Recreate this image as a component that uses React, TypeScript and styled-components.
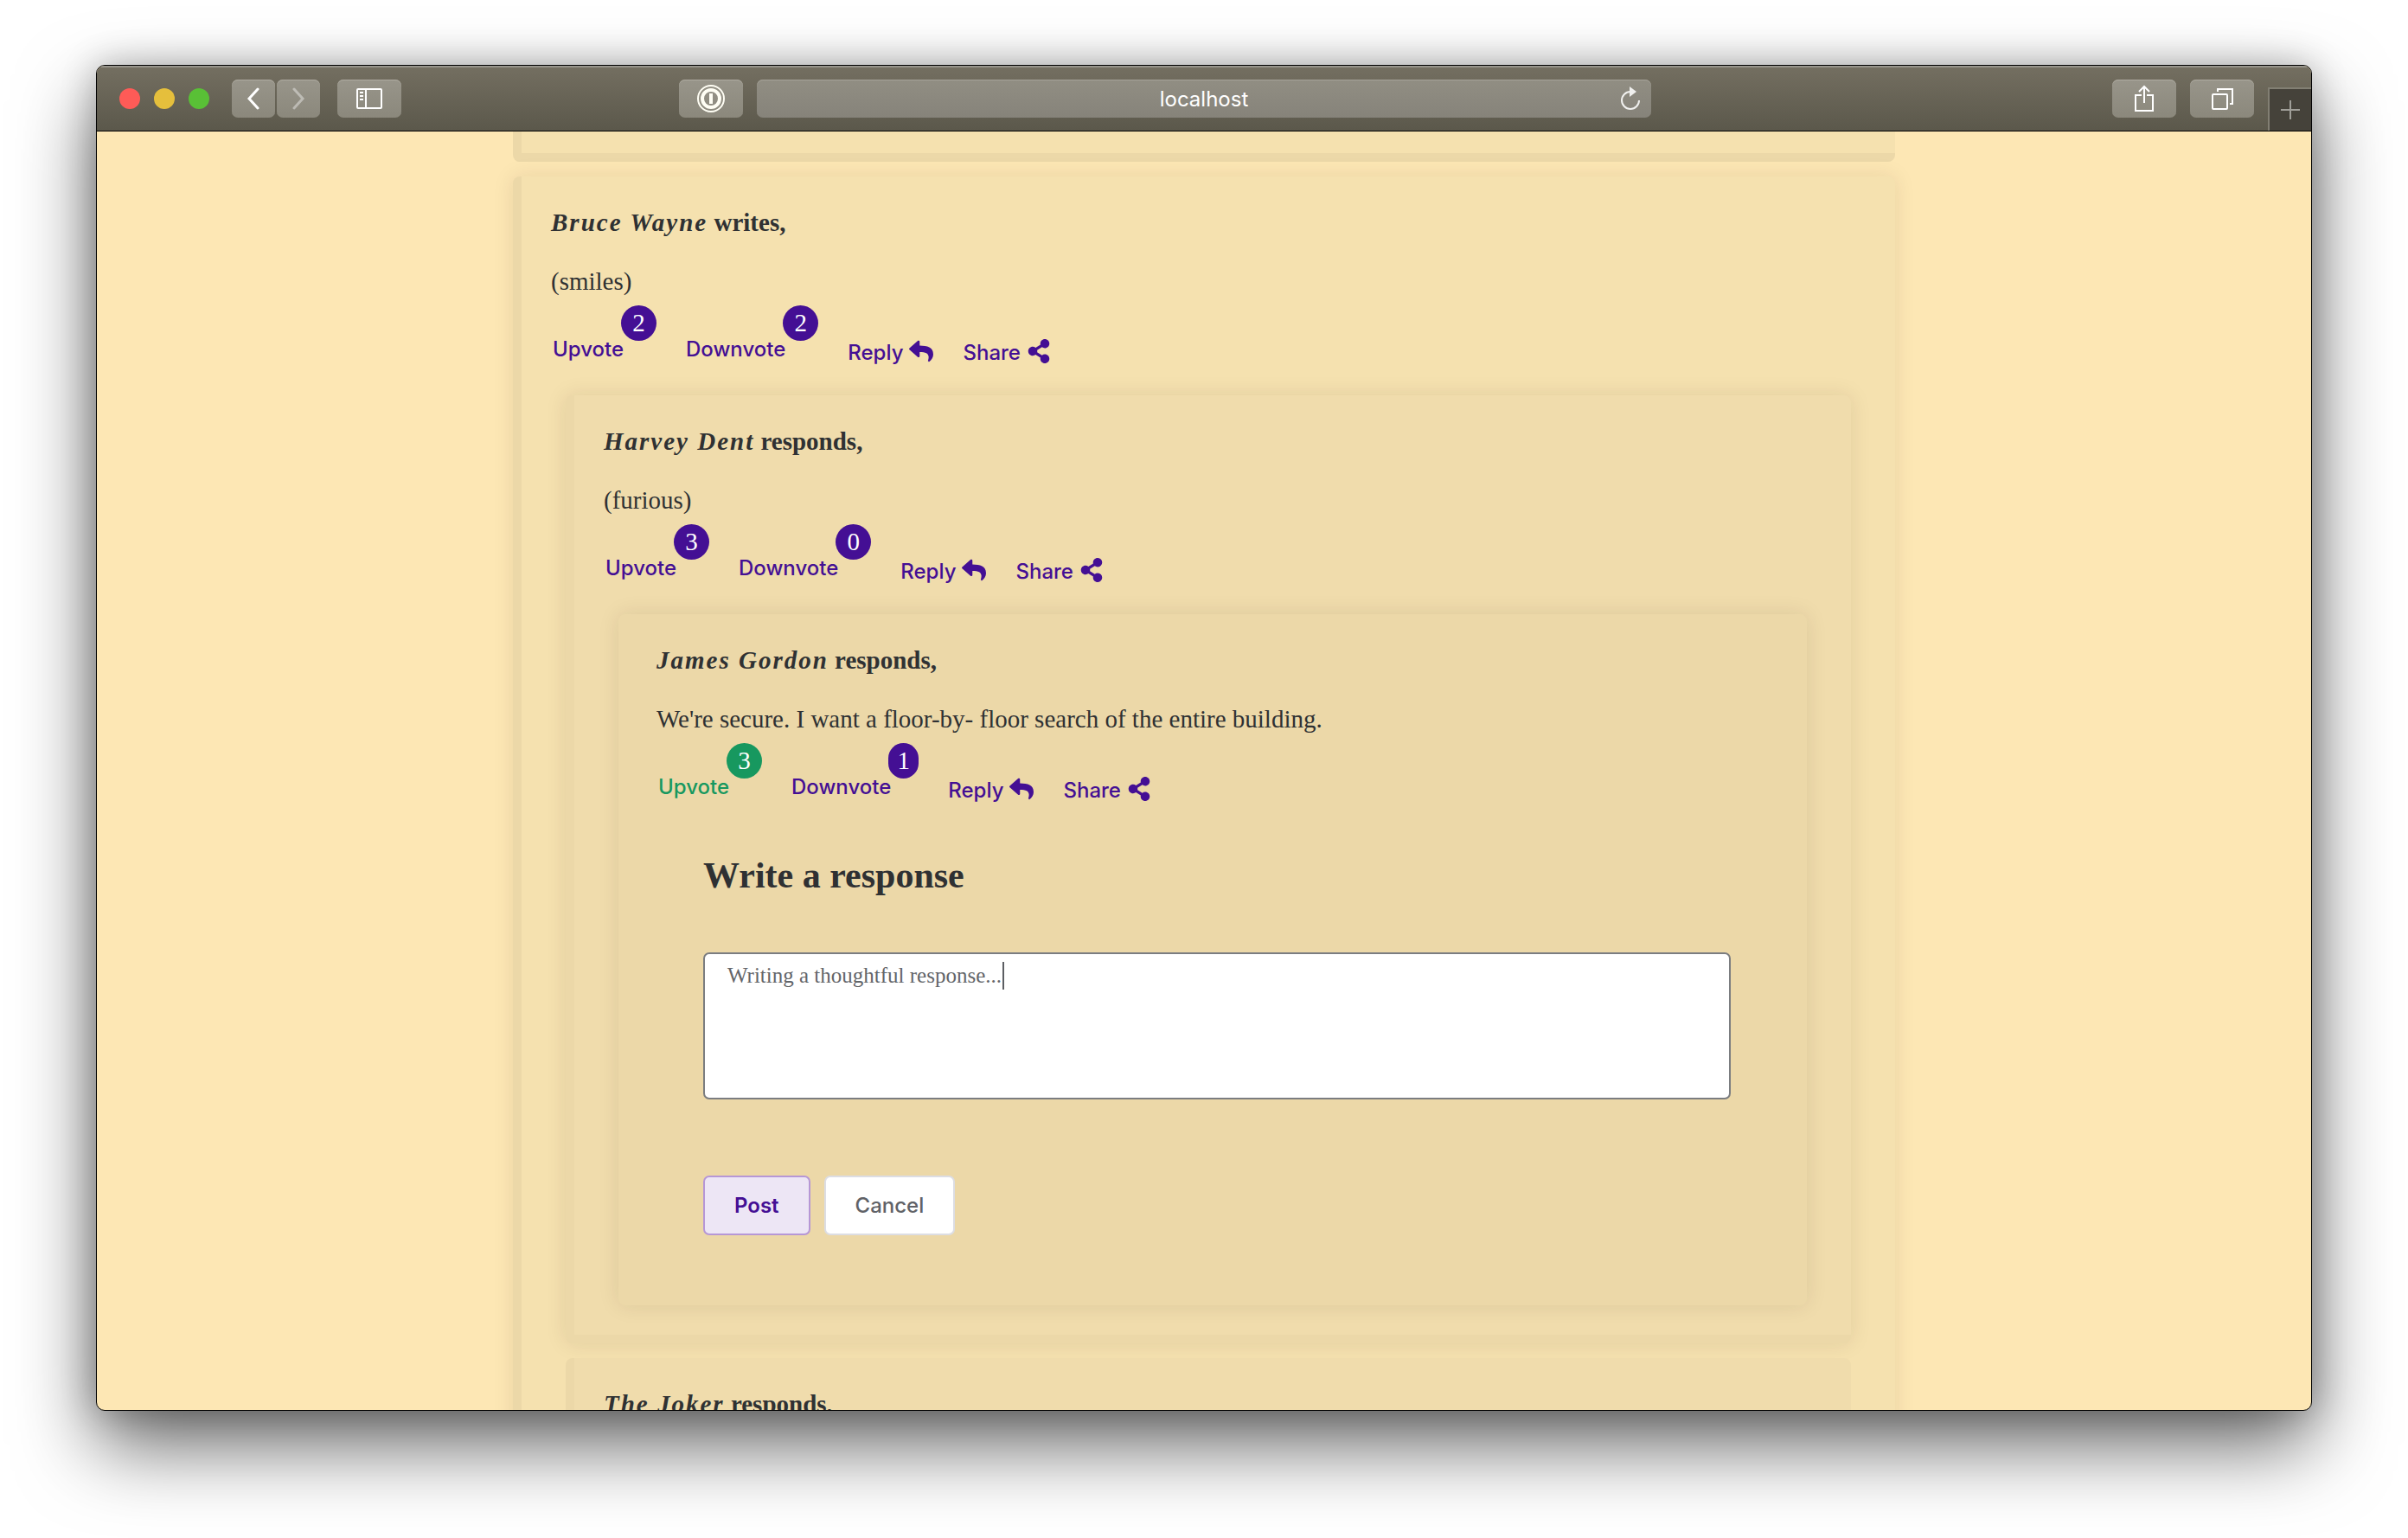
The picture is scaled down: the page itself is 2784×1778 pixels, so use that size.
import React from "react";
import styled, { createGlobalStyle, css } from "styled-components";
import { FaReply, FaShareAlt } from "react-icons/fa";

const serif = `"Liberation Serif", serif`;
const sans = `Inter, "Liberation Sans", sans-serif`;
const purple = "#440f94";
const green = "#17985f";
const ink = "#2f3133";
const edge = "#ecd8a8";
const levels = ["#f5e1af", "#f0dcac", "#ecd8a8"];

const Global = createGlobalStyle`
  * { box-sizing: border-box; }
  body { margin: 0; background: #fff; }
  button, textarea, input { margin: 0; font: inherit; }
`;

const Desktop = styled.div`
  height: 100vh;
  padding: 75px 111px 147px;
  overflow: hidden;
`;

const Window = styled.div`
  height: 100%;
  display: flex;
  flex-direction: column;
  overflow: hidden;
  border: 1px solid #000;
  border-radius: 10px;
  background: #fde7b4;
  box-shadow: 0 40px 90px rgba(0, 0, 0, 0.6), 0 0 40px rgba(0, 0, 0, 0.24);
`;

const Toolbar = styled.header`
  flex: none;
  height: 76px;
  display: grid;
  grid-template-columns: 1fr minmax(0, 1034px) 1fr;
  align-items: center;
  border-bottom: 1px solid #000;
  background: linear-gradient(#746f61, #5b584b);
  box-shadow: inset 0 2px 0 #98958c;
`;

const Side = styled.div`
  height: 100%;
  display: flex;
  align-items: center;
`;

const LeftSide = styled(Side)`
  padding: 0 16px 0 26px;
`;

const RightSide = styled(Side)`
  justify-content: flex-end;
  gap: 16px;
`;

const Lights = styled.div`
  display: flex;
  gap: 16px;
  margin-right: 26px;
`;

const Light = styled.button<{ $color: string }>`
  width: 24px;
  height: 24px;
  padding: 0;
  border: 0;
  border-radius: 50%;
  background: ${(p) => p.$color};
`;

const ToolButton = styled.button<{ $narrow?: boolean }>`
  width: ${(p) => (p.$narrow ? 50 : 74)}px;
  height: 44px;
  display: flex;
  align-items: center;
  justify-content: center;
  padding: 0;
  border: 0;
  border-radius: 7px;
  color: #fff;
  background: linear-gradient(#98958a, #8b887c);
  box-shadow: inset 0 1px 0 #aeaba1;
`;

const NavPair = styled.div`
  display: flex;
  gap: 2px;
  margin-right: 20px;
`;

const Extension = styled(ToolButton)`
  margin-left: auto;
`;

const AddressBar = styled.div`
  height: 44px;
  display: grid;
  grid-template-columns: 48px 1fr 48px;
  align-items: center;
  border-radius: 7px;
  background: linear-gradient(#918e83, #86837a);
  box-shadow: inset 0 1px 0 #a6a399;
`;

const Address = styled.input`
  grid-column: 2;
  width: 100%;
  height: 44px;
  padding: 2px 0 0;
  border: 0;
  outline: 0;
  background: none;
  color: #fff;
  font: 400 24px/32px ${sans};
  text-align: center;
`;

const Reload = styled.button`
  height: 44px;
  padding: 0;
  border: 0;
  background: none;
  color: #f0f0ee;
  display: flex;
  align-items: center;
  justify-content: center;
`;

const NewTab = styled.button`
  align-self: flex-end;
  width: 50px;
  height: 50px;
  padding: 0;
  display: flex;
  align-items: center;
  justify-content: center;
  border: 0;
  border-top: 2px solid #827f73;
  border-left: 2px solid #827f73;
  background: #45423a;
  color: #a09f99;
`;

const Page = styled.main`
  flex: 1;
  min-height: 0;
  overflow: hidden;
  color: ${ink};
  font: 400 29px/34px ${serif};
`;

const Thread = styled.div`
  width: 100%;
  max-width: 1598px;
  margin: 0 auto;
`;

const Card = styled.article<{ $level: number; $raised?: boolean }>`
  padding: 36px 34px 34px;
  border: 0 solid ${edge};
  border-left-width: 10px;
  border-bottom-width: 10px;
  border-radius: 8px;
  background: ${(p) => levels[p.$level]};
  ${(p) => p.$raised && css`box-shadow: 0 0 24px rgba(50, 25, 0, 0.1);`}
  & + & {
    margin-top: 17px;
  }
`;

const PreviousCard = styled(Card)`
  padding: 25px 0 0;
  border-top-left-radius: 0;
  border-top-right-radius: 0;
`;

const Byline = styled.h3`
  margin: 0 0 34px;
  font-size: 29px;
  line-height: 34px;
  font-weight: 700;
`;

const Author = styled.em`
  letter-spacing: 2px;
`;

const Body = styled.p`
  margin: 0 0 11px;
`;

const Actions = styled.div`
  display: flex;
  align-items: flex-end;
  gap: 34px;
  padding-left: 2px;
  color: ${purple};
`;

const ActionButton = styled.button`
  display: flex;
  align-items: center;
  gap: 7px;
  padding: 0;
  border: 0;
  background: none;
  color: inherit;
  font: 500 24px/28px ${sans};

  svg {
    width: auto;
    height: 28px;
    margin-top: -4px;
  }
`;

const VoteButton = styled(ActionButton)<{ $active?: boolean }>`
  align-items: flex-start;
  gap: 0;
  padding-bottom: 4px;
  color: ${(p) => (p.$active ? green : purple)};
`;

const VoteLabel = styled.span`
  padding-top: 37px;
`;

const Badge = styled.span<{ $slim: boolean; $active?: boolean }>`
  min-width: ${(p) => (p.$slim ? 35 : 41)}px;
  height: 41px;
  margin-left: -3px;
  border-radius: 21px;
  background: ${(p) => (p.$active ? green : purple)};
  color: #fff;
  font: 400 29px/40px ${serif};
  text-align: center;
`;

const Replies = styled.div`
  margin: 35px 17px 0;
`;

const ResponseForm = styled.form`
  display: flex;
  flex-direction: column;
  margin: 60px 54px 37px;
`;

const FormTitle = styled.label`
  margin-bottom: 65px;
  font-size: 42px;
  line-height: 48px;
  font-weight: 700;
`;

const Field = styled.div`
  position: relative;
  display: flex;
  margin-bottom: 88px;
`;

const Editor = styled.textarea`
  width: 100%;
  height: 170px;
  padding: 8px 26px;
  border: 2px solid #7b7d80;
  border-radius: 7px;
  outline: 0;
  resize: none;
  background: #fff;
  color: #636569;
  caret-color: transparent;
  font: 400 25px/34px ${serif};
`;

const Caret = styled.span`
  position: absolute;
  top: 11px;
  left: 346px;
  width: 2px;
  height: 32px;
  background: #5c5e63;
`;

const Buttons = styled.div`
  display: flex;
  gap: 16px;
`;

const FormButton = styled.button<{ $primary?: boolean }>`
  height: 69px;
  padding: 0 34px;
  border: 2px solid ${(p) => (p.$primary ? "#b697d6" : "#dcdde3")};
  border-radius: 7px;
  background: ${(p) => (p.$primary ? "#ede6f5" : "#fff")};
  color: ${(p) => (p.$primary ? purple : "#606267")};
  font: ${(p) => (p.$primary ? 600 : 500)} 24px/32px ${sans};
`;

type CommentProps = {
  author: string;
  verb: string;
  text: string;
  up: number;
  down: number;
  upvoted?: boolean;
  level: number;
  raised?: boolean;
  children?: React.ReactNode;
};

function Vote({ label, count, active }: { label: string; count: number; active?: boolean }) {
  return (
    <VoteButton type="button" $active={active}>
      <VoteLabel>{label}</VoteLabel>
      <Badge $slim={count === 1} $active={active}>{count}</Badge>
    </VoteButton>
  );
}

function Comment({ author, verb, text, up, down, upvoted, level, raised, children }: CommentProps) {
  return (
    <Card $level={level} $raised={raised}>
      <Byline><Author>{author}</Author> {verb},</Byline>
      <Body>{text}</Body>
      <Actions>
        <Vote label="Upvote" count={up} active={upvoted} />
        <Vote label="Downvote" count={down} />
        <ActionButton type="button">Reply <FaReply /></ActionButton>
        <ActionButton type="button">Share <FaShareAlt /></ActionButton>
      </Actions>
      {children}
    </Card>
  );
}

function Chevron({ flip }: { flip?: boolean }) {
  return (
    <svg width="16" height="26" viewBox="0 0 16 26" fill="none" stroke="currentColor" strokeWidth="3" strokeLinecap="round" opacity={flip ? 0.4 : 1}>
      <path d={flip ? "M3 2 L13 13 L3 24" : "M13 2 L3 13 L13 24"} />
    </svg>
  );
}

export default function App() {
  return (
    <Desktop>
      <Global />
      <Window>
        <Toolbar>
          <LeftSide>
            <Lights>
              <Light $color="#fe5b57" aria-label="Close" />
              <Light $color="#e5bf3c" aria-label="Minimize" />
              <Light $color="#59c036" aria-label="Zoom" />
            </Lights>
            <NavPair>
              <ToolButton $narrow aria-label="Back"><Chevron /></ToolButton>
              <ToolButton $narrow aria-label="Forward"><Chevron flip /></ToolButton>
            </NavPair>
            <ToolButton aria-label="Sidebar">
              <svg width="30" height="24" viewBox="0 0 30 24" fill="none" stroke="currentColor" strokeWidth="2">
                <rect x="1" y="1" width="28" height="22" rx="1" />
                <path d="M11 1 V23 M4 5 H8 M4 9 H8 M4 13 H8" />
              </svg>
            </ToolButton>
            <Extension aria-label="Password manager">
              <svg width="34" height="34" viewBox="0 0 34 34" fill="none" stroke="#fffef4">
                <circle cx="17" cy="17" r="15" strokeWidth="2" />
                <circle cx="17" cy="17" r="10" strokeWidth="4" />
                <path d="M17 11 V23" strokeWidth="4" />
              </svg>
            </Extension>
          </LeftSide>
          <AddressBar>
            <Address aria-label="Address" defaultValue="localhost" />
            <Reload aria-label="Reload">
              <svg width="26" height="28" viewBox="0 0 26 28" fill="none" stroke="currentColor" strokeWidth="2">
                <path d="M13 6 A10 10 0 1 0 23 16" />
                <path d="M12 0 L20 6 L12 12 Z" fill="currentColor" stroke="none" />
              </svg>
            </Reload>
          </AddressBar>
          <RightSide>
            <ToolButton aria-label="Share page">
              <svg width="26" height="32" viewBox="0 0 26 32" fill="none" stroke="currentColor" strokeWidth="2">
                <path d="M10 12 H3 V30 H23 V12 H16 M13 21 V2 M7 8 L13 2 L19 8" />
              </svg>
            </ToolButton>
            <ToolButton aria-label="Tabs">
              <svg width="26" height="26" viewBox="0 0 26 26" fill="none" stroke="currentColor" strokeWidth="2">
                <rect x="2" y="8" width="17" height="17" rx="1" />
                <path d="M8 5 V2 H25 V19 H22" />
              </svg>
            </ToolButton>
            <NewTab aria-label="New tab">
              <svg width="22" height="22" viewBox="0 0 22 22" fill="none" stroke="currentColor" strokeWidth="2">
                <path d="M11 0 V22 M0 11 H22" />
              </svg>
            </NewTab>
          </RightSide>
        </Toolbar>
        <Page>
          <Thread>
            <PreviousCard $level={0} />
            <Comment level={0} raised author="Bruce Wayne" verb="writes" text="(smiles)" up={2} down={2}>
              <Replies>
                <Comment level={1} raised author="Harvey Dent" verb="responds" text="(furious)" up={3} down={0}>
                  <Replies>
                    <Comment
                      level={2}
                      raised
                      upvoted
                      author="James Gordon"
                      verb="responds"
                      text="We're secure. I want a floor-by- floor search of the entire building."
                      up={3}
                      down={1}
                    >
                      <ResponseForm>
                        <FormTitle htmlFor="response">Write a response</FormTitle>
                        <Field>
                          <Editor id="response" defaultValue="Writing a thoughtful response..." />
                          <Caret />
                        </Field>
                        <Buttons>
                          <FormButton type="button" $primary>Post</FormButton>
                          <FormButton type="button">Cancel</FormButton>
                        </Buttons>
                      </ResponseForm>
                    </Comment>
                  </Replies>
                </Comment>
                <Card $level={1}>
                  <Byline><Author>The Joker</Author> responds,</Byline>
                </Card>
              </Replies>
            </Comment>
          </Thread>
        </Page>
      </Window>
    </Desktop>
  );
}
